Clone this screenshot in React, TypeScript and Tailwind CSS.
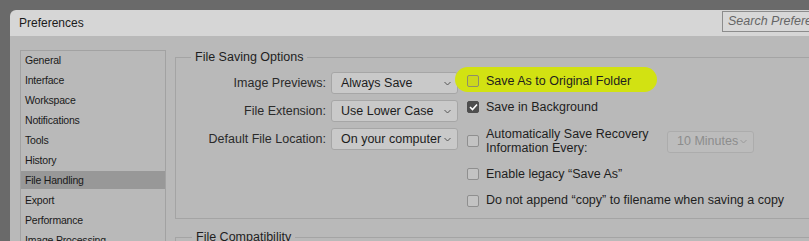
import React from "react";

const navItems = [
  "General",
  "Interface",
  "Workspace",
  "Notifications",
  "Tools",
  "History",
  "File Handling",
  "Export",
  "Performance",
  "Image Processing",
  "Scratch Disks",
];

const Chevron = ({ color = "#555" }: { color?: string }) => (
  <svg width="7" height="5" viewBox="0 0 7 5" className="shrink-0">
    <polyline points="0.5,1 3.5,4 6.5,1" fill="none" stroke={color} strokeWidth="1" />
  </svg>
);

const Select = ({ value, width, disabled }: { value: string; width: string; disabled?: boolean }) => (
  <div
    className={`flex items-center justify-between h-[22px] rounded-[3px] border pl-[9px] pr-[6px] ${width} ${
      disabled
        ? "bg-[#bcbcbc] border-[#acacac] text-[#8c8c8c]"
        : "bg-[#c9c9c9] border-[#a6a6a6] text-[#1c1c1c]"
    }`}
  >
    <span className="whitespace-nowrap">{value}</span>
    <Chevron color={disabled ? "#9a9a9a" : "#555"} />
  </div>
);

const Checkbox = ({ checked, tinted }: { checked?: boolean; tinted?: boolean }) => (
  <div
    className={`w-[12px] h-[12px] shrink-0 rounded-[2px] border flex items-center justify-center ${
      checked
        ? "bg-[#4e4e4e] border-[#4e4e4e]"
        : tinted
        ? "bg-[#ccd81c] border-[#8e8e6a]"
        : "bg-[#c3c3c3] border-[#8f8f8f]"
    }`}
  >
    {checked && (
      <svg width="9" height="8" viewBox="0 0 9 8">
        <polyline points="1,4 3.5,6.5 8,1.5" fill="none" stroke="#fff" strokeWidth="1.6" />
      </svg>
    )}
  </div>
);

export default function App() {
  return (
    <div
      className="h-[241px] w-[809px] overflow-hidden bg-[#6a6a6a] pl-[10px] pt-[10px]"
      style={{ fontFamily: '"Liberation Sans", Arial, sans-serif' }}
    >
      <div className="w-[870px] rounded-tl-[6px] overflow-hidden">
        {/* Title bar */}
        <div className="flex h-[26px] bg-[#d6d6d6] pt-[1px]">
          <span className="pl-[9px] pt-[5px] text-[12px] leading-[14px] text-[#1a1a1a]">Preferences</span>
          <div className="flex-1" />
          <div className="mr-[10px] h-[21px] w-[148px] border border-[#8c8c8c] bg-[#d8d8d8] pl-[5px] text-[12.5px] leading-[19px] italic text-[#666] whitespace-nowrap overflow-hidden">
            Search Preferences
          </div>
        </div>

        {/* Body */}
        <div className="flex h-[260px] bg-[#b9b9b9] pl-[10px] pt-[14px] gap-[9px]">
          {/* Category list */}
          <div className="w-[146px] h-[240px] shrink-0 border border-[#a2a2a2]">
            {navItems.map((item) => (
              <div
                key={item}
                className={`h-[18px] mb-[2px] pl-[4px] text-[10.5px] leading-[18px] tracking-[-0.2px] text-[#1a1a1a] whitespace-nowrap ${
                  item === "File Handling" ? "bg-[#989898]" : ""
                }`}
              >
                {item}
              </div>
            ))}
          </div>

          {/* Settings */}
          <div className="flex-1 mr-[10px] text-[12.5px] text-[#1e1e1e]">
            <fieldset className="border border-[#a4a4a4] pt-[3px] pb-[4px]">
              <legend className="ml-[15px] px-[4px] leading-[15px]">File Saving Options</legend>
              <div className="flex items-start">
                <div className="mt-[4px] flex flex-col gap-[6px]">
                  {[
                    ["Image Previews:", "Always Save"],
                    ["File Extension:", "Use Lower Case"],
                    ["Default File Location:", "On your computer"],
                  ].map(([label, value]) => (
                    <div key={label} className="flex items-center gap-[5px]">
                      <span className="w-[150px] text-right text-[#2a2a2a] whitespace-nowrap">{label}</span>
                      <Select value={value} width="w-[127px]" />
                    </div>
                  ))}
                </div>

                <div className="ml-[9px] flex flex-col">
                  <div className="relative flex h-[26px] items-center gap-[7px]">
                    <div className="absolute left-[-12px] top-[-1px] h-[25px] w-[202px] rounded-full bg-[#d2e212] blur-[0.6px]" />
                    <div className="relative flex items-center gap-[7px]">
                      <Checkbox tinted />
                      <span className="whitespace-nowrap">Save As to Original Folder</span>
                    </div>
                  </div>
                  <div className="flex h-[26px] items-center gap-[7px]">
                    <Checkbox checked />
                    <span className="whitespace-nowrap">Save in Background</span>
                  </div>
                  <div className="flex h-[41px] items-center gap-[7px]">
                    <Checkbox />
                    <span className="w-[181px] leading-[14px]">
                      Automatically Save Recovery
                      <br />
                      Information Every:
                    </span>
                    <div className="-ml-[7px] pt-[2px]">
                      <Select value="10 Minutes" width="w-[87px]" disabled />
                    </div>
                  </div>
                  <div className="flex h-[26px] items-center gap-[7px]">
                    <Checkbox />
                    <span className="whitespace-nowrap">Enable legacy “Save As”</span>
                  </div>
                  <div className="flex h-[27px] items-center gap-[7px]">
                    <Checkbox />
                    <span className="whitespace-nowrap">Do not append “copy” to filename when saving a copy</span>
                  </div>
                </div>
              </div>
            </fieldset>

            <fieldset className="mt-[11px] h-[60px] border border-[#a4a4a4]">
              <legend className="ml-[16px] px-[4px] leading-[15px]">File Compatibility</legend>
            </fieldset>
          </div>
        </div>
      </div>
    </div>
  );
}
